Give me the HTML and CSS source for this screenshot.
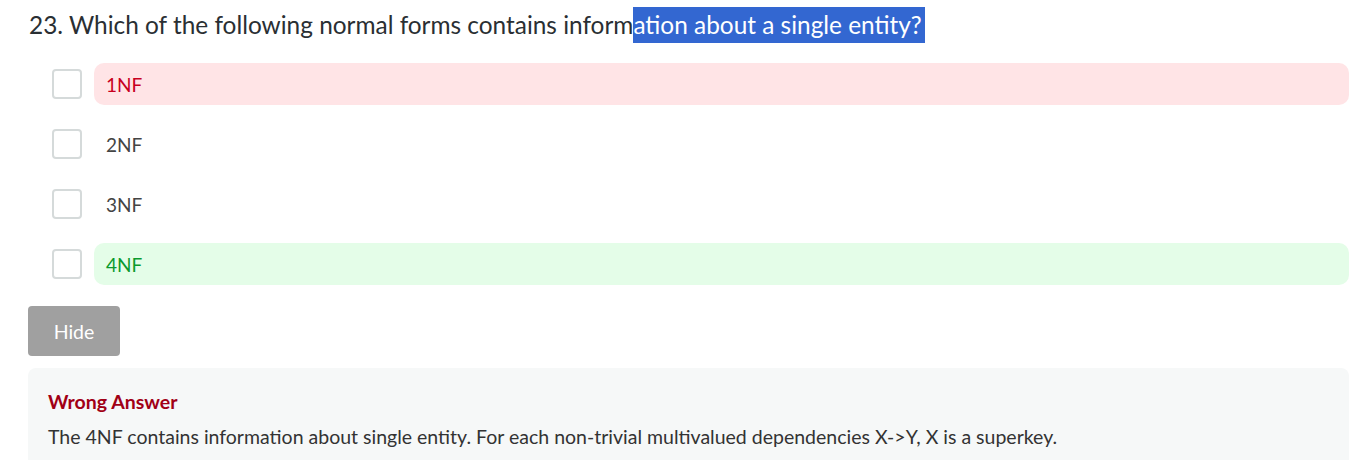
FILE: index.html
```html
<!DOCTYPE html>
<html>
<head>
<meta charset="utf-8">
<link rel="stylesheet" href="styles.css">
</head>
<body>
<div class="page">
  <h2 class="question">23. Which of the following normal forms contains inform<span class="sel">ation about a single entity? </span></h2>
  <div class="options">
    <div class="option">
      <span class="check"></span>
      <div class="label wrong">1NF</div>
    </div>
    <div class="option">
      <span class="check"></span>
      <div class="label">2NF</div>
    </div>
    <div class="option">
      <span class="check"></span>
      <div class="label">3NF</div>
    </div>
    <div class="option">
      <span class="check"></span>
      <div class="label right">4NF</div>
    </div>
  </div>
  <button class="hide">Hide</button>
  <div class="explain">
    <div class="verdict">Wrong Answer</div>
    <p class="text">The 4NF contains information about single entity. For each non-trivial multivalued dependencies X-&gt;Y, X is a superkey.</p>
  </div>
</div>
</body>
</html>
```
FILE: styles.css
```css
html, body {
  margin: 0;
  padding: 0;
  background: #ffffff;
}
body {
  font-family: Lato, "Noto Sans", sans-serif;
  color: #333;
}
.page {
  padding: 7px 1px 0 28px;
}
.question {
  margin: 0;
  font-size: 24.4px;
  font-weight: 400;
  line-height: 36px;
  height: 36px;
  color: #2a2f33;
  padding-left: 1px;
  white-space: nowrap;
}
.sel {
  display: inline-block;
  line-height: 36px;
  background: #3367d1;
  color: #fff;
  padding-right: 3px;
}
.options {
  display: flex;
  flex-direction: column;
  gap: 18px;
  margin-top: 20px;
  padding-left: 24px;
}
.option {
  display: flex;
  align-items: center;
  gap: 12px;
  height: 42px;
}
.check {
  width: 26px;
  height: 26px;
  border: 2px solid #d5dada;
  border-radius: 4px;
  flex: none;
  background: #fff;
}
.label {
  flex: 1;
  height: 42px;
  display: flex;
  align-items: center;
  padding-left: 12px;
  font-size: 19px;
  color: #444;
  border-radius: 10px;
}
.label.wrong {
  background: #ffe4e6;
  color: #c8001e;
}
.label.right {
  background: #e4fde8;
  color: #0a9a2e;
}
.hide {
  display: block;
  margin-top: 21px;
  width: 92px;
  height: 50px;
  border: none;
  border-radius: 4px;
  background: #a0a0a0;
  color: #fff;
  font-family: Lato, "Noto Sans", sans-serif;
  font-size: 19.5px;
  padding: 0;
}
.explain {
  margin-top: 12px;
  background: #f6f8f8;
  border-radius: 8px;
  padding: 22px 20px 20px 20px;
}
.verdict {
  font-size: 19.5px;
  font-weight: 700;
  color: #a10016;
  line-height: 24px;
}
.text {
  margin: 11px 0 0;
  font-size: 19.5px;
  line-height: 24px;
  color: #333;
}
```
